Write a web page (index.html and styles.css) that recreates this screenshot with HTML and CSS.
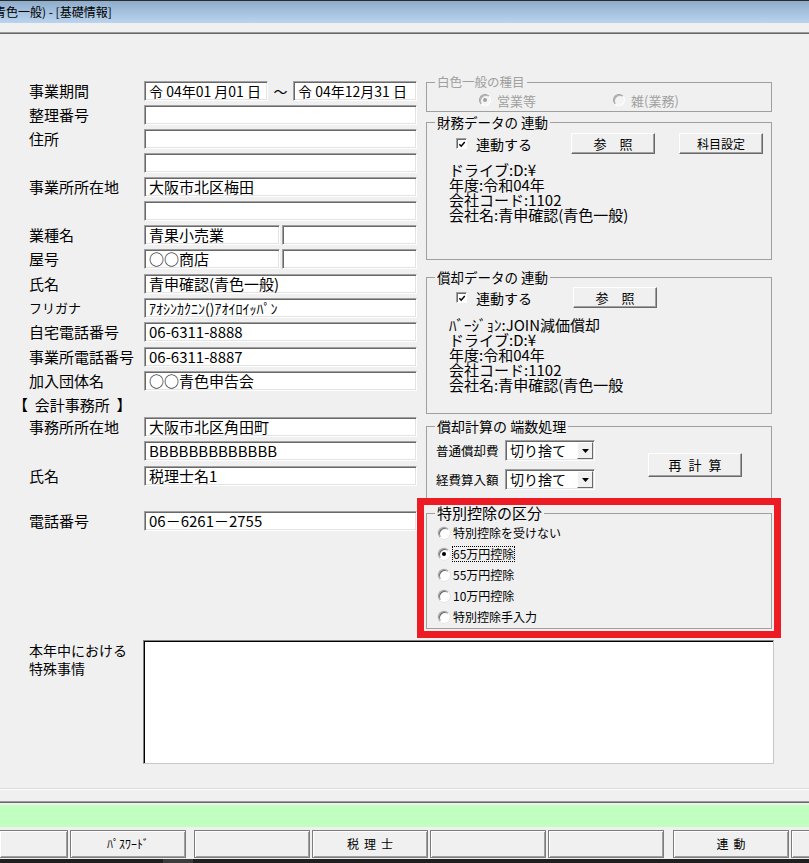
FILE: index.html
```html
<!DOCTYPE html>
<html lang="ja">
<head>
  <meta charset="UTF-8">
  <title>基礎情報</title>
  <link rel="stylesheet" href="styles.css">
</head>
<body>
  <div class="titlebar"><span class="title">青色一般) - [基礎情報]</span></div>
  <div class="menustrip"></div>
  <div class="rule"></div>

  <div class="main">
    <div class="upper">
      <div class="form">
        <div class="row"><div class="label">事業期間</div><div class="field date">令 04年01 月01 日</div><div class="tilde">～</div><div class="field date">令 04年12月31 日</div></div>
        <div class="row"><div class="label">整理番号</div><div class="field"></div></div>
        <div class="row"><div class="label">住所</div><div class="field"></div></div>
        <div class="row"><div class="label"></div><div class="field"></div></div>
        <div class="row"><div class="label">事業所所在地</div><div class="field">大阪市北区梅田</div></div>
        <div class="row"><div class="label"></div><div class="field"></div></div>
        <div class="row"><div class="label">業種名</div><div class="field half">青果小売業</div><div class="field half second"></div></div>
        <div class="row wide"><div class="label">屋号</div><div class="field half">○○商店</div><div class="field half second"></div></div>
        <div class="row"><div class="label">氏名</div><div class="field">青申確認(青色一般)</div></div>
        <div class="row"><div class="label kana">フリガナ</div><div class="field small">ｱｵｼﾝｶｸﾆﾝ()ｱｵｲﾛｲｯﾊﾟﾝ</div></div>
        <div class="row wide"><div class="label">自宅電話番号</div><div class="field">06-6311-8888</div></div>
        <div class="row"><div class="label">事業所電話番号</div><div class="field">06-6311-8887</div></div>
        <div class="row"><div class="label">加入団体名</div><div class="field">○○青色申告会</div></div>

        <div class="section">【&nbsp; 会計事務所 &nbsp;】</div>

        <div class="row"><div class="label">事務所所在地</div><div class="field">大阪市北区角田町</div></div>
        <div class="row wide"><div class="label"></div><div class="field">BBBBBBBBBBBBB</div></div>
        <div class="row"><div class="label">氏名</div><div class="field">税理士名1</div></div>
        <div class="row tel"><div class="label">電話番号</div><div class="field">06－6261－2755</div></div>
      </div>

      <div class="side">
        <fieldset class="grp g-kind">
          <legend>白色一般の種目</legend>
          <div class="kind-row">
            <span class="opt first"><span class="radio on off"></span>営業等</span>
            <span class="opt"><span class="radio off"></span>雑(業務)</span>
          </div>
        </fieldset>

        <fieldset class="grp g-fin">
          <legend>財務データの 連動</legend>
          <div class="link-row">
            <span class="check-label"><span class="check"><svg width="9" height="9" viewBox="0 0 9 9"><path d="M1.5 4.2 L3.6 6.4 L7.6 1.8" fill="none" stroke="#000" stroke-width="1.7"/></svg></span>連動する</span>
            <span class="btn ref">参　照</span>
            <span class="btn subj">科目設定</span>
          </div>
          <div class="info">
            ドライブ:D:¥<br>
            年度:令和04年<br>
            会社コード:1102<br>
            会社名:青申確認(青色一般)
          </div>
        </fieldset>

        <fieldset class="grp g-dep">
          <legend>償却データの 連動</legend>
          <div class="link-row">
            <span class="check-label"><span class="check"><svg width="9" height="9" viewBox="0 0 9 9"><path d="M1.5 4.2 L3.6 6.4 L7.6 1.8" fill="none" stroke="#000" stroke-width="1.7"/></svg></span>連動する</span>
            <span class="btn ref ref2">参　照</span>
          </div>
          <div class="info">
            ﾊﾞｰｼﾞｮﾝ:JOIN減価償却<br>
            ドライブ:D:¥<br>
            年度:令和04年<br>
            会社コード:1102<br>
            会社名:青申確認(青色一般
          </div>
        </fieldset>

        <fieldset class="grp g-round">
          <legend>償却計算の 端数処理</legend>
          <div class="round-body">
            <div class="round-rows">
              <div class="round-row"><span class="round-label">普通償却費</span><span class="select"><span class="select-text">切り捨て</span><span class="select-arrow"><svg width="7" height="4" viewBox="0 0 7 4"><path d="M0 0 H7 L3.5 4 Z" fill="#000"/></svg></span></span></div>
              <div class="round-row"><span class="round-label">経費算入額</span><span class="select"><span class="select-text">切り捨て</span><span class="select-arrow"><svg width="7" height="4" viewBox="0 0 7 4"><path d="M0 0 H7 L3.5 4 Z" fill="#000"/></svg></span></span></div>
            </div>
            <span class="btn recalc">再計算</span>
          </div>
        </fieldset>

        <div class="highlight">
          <fieldset class="grp g-deduct">
            <legend>特別控除の区分</legend>
            <div class="choice"><span class="radio"></span>特別控除を受けない</div>
            <div class="choice"><span class="radio on"></span><span class="focus">65万円控除</span></div>
            <div class="choice"><span class="radio"></span>55万円控除</div>
            <div class="choice"><span class="radio"></span>10万円控除</div>
            <div class="choice"><span class="radio"></span>特別控除手入力</div>
          </fieldset>
        </div>
      </div>
    </div>

    <div class="memo-row">
      <div class="memo-label">本年中における<br>特殊事情</div>
      <div class="memo"></div>
    </div>
  </div>

  <div class="sep"></div>
  <div class="rule"></div>
  <div class="statusbar"></div>

  <div class="fkeys">
    <span class="fkey first"></span>
    <span class="fkey small">ﾊﾟｽﾜｰﾄﾞ</span>
    <span class="fkey group"></span>
    <span class="fkey spaced">税理士</span>
    <span class="fkey"></span>
    <span class="fkey"></span>
    <span class="fkey group spaced wide">連動</span>
    <span class="fkey"></span>
  </div>
  <div class="taskbar"><span class="task"></span></div>
</body>
</html>
```

FILE: styles.css
```css
body {
  margin: 0;
  width: 809px;
  height: 863px;
  overflow: hidden;
  background: #f0f0f0;
  font-family: "Noto Sans CJK JP", sans-serif;
  color: #000;
}

.titlebar {
  height: 22px;
  border-top: 1px solid #2b2b2b;
  background: linear-gradient(#8eadcb, #bad4ef);
  font-size: 12px;
  line-height: 22px;
  white-space: nowrap;
  overflow: hidden;
}

.title {
  display: inline-block;
  margin-left: -6px;
}

.menustrip {
  height: 9px;
}

.rule {
  border-top: 1px solid #9a9a9a;
  border-bottom: 1px solid #696969;
}

.main {
  height: 754px;
}

.upper {
  display: flex;
}

/* left form */
.form {
  width: 417px;
  padding-top: 47px;
}

.row {
  display: flex;
  align-items: center;
  height: 20px;
  margin-bottom: 4px;
}

.row.wide { margin-bottom: 5px; }
.row.tel { margin-top: 25px; }

.label {
  width: 144px;
  flex: none;
  padding-left: 29px;
  box-sizing: border-box;
  font-size: 15px;
  line-height: 20px;
  white-space: nowrap;
}

.label.kana { font-size: 13px; }

.field {
  width: 273px;
  height: 20px;
  flex: none;
  box-sizing: border-box;
  padding-left: 4px;
  background: #fff;
  border: 1px solid;
  border-color: #a0a0a0 #fff #fff #a0a0a0;
  box-shadow: inset 1px 1px #696969, inset -1px -1px #e3e3e3;
  font-size: 15px;
  line-height: 18px;
  white-space: nowrap;
  overflow: hidden;
}

.field.date {
  width: 124px;
  font-size: 14px;
}

.field.half { width: 136px; }
.field.half.second { width: 135px; margin-left: 2px; }
.field.small { font-size: 14px; }

.tilde {
  width: 25px;
  text-align: center;
  font-size: 14px;
}

.section {
  height: 20px;
  line-height: 20px;
  margin: 2px 0;
  padding-left: 13px;
  font-size: 15px;
}

/* right column */
.side {
  width: 346px;
  margin-left: 9px;
  padding-top: 41px;
}

.grp {
  margin: 0;
  padding: 0;
  min-width: 0;
  border: 1px solid #a0a0a0;
  box-sizing: border-box;
}

.grp legend {
  margin-left: 8px;
  padding: 0 2px;
  font-size: 14px;
  line-height: 16px;
}

.g-kind { height: 37px; }
.g-kind legend { font-size: 12.5px; line-height: 14px; color: #a0a0a0; }

.kind-row {
  display: flex;
  margin: 4px 0 0 52px;
  height: 14px;
  font-size: 13px;
  color: #a0a0a0;
}

.opt {
  display: flex;
  align-items: center;
  gap: 6px;
}

.opt.first { width: 134px; }

.g-fin { height: 146px; margin-top: 2px; }
.g-fin legend, .g-dep legend { font-size: 13.5px; }
.g-dep { height: 145px; margin-top: 9px; }

.link-row {
  display: flex;
  align-items: center;
  height: 21px;
  margin-top: 3px;
}

.g-dep .link-row { margin-top: 2px; }

.check-label {
  display: flex;
  align-items: center;
  gap: 9px;
  width: 115px;
  margin-left: 29px;
  font-size: 14px;
}

.check {
  width: 11px;
  height: 11px;
  box-sizing: border-box;
  background: #fff;
  border: 1px solid;
  border-color: #a0a0a0 #fff #fff #a0a0a0;
  box-shadow: inset 1px 1px #696969;
  display: flex;
  align-items: center;
  justify-content: center;
}

.check svg { margin: 1px 0 0 1px; }

.btn {
  display: block;
  height: 21px;
  box-sizing: border-box;
  background: #f0f0f0;
  border: 1px solid;
  border-color: #fff #696969 #696969 #fff;
  box-shadow: inset -1px -1px #a0a0a0;
  font-size: 13px;
  line-height: 19px;
  text-align: center;
  white-space: nowrap;
}

.btn.ref { width: 84px; }
.btn.ref2 { margin-left: 2px; }
.btn.subj { width: 84px; margin-left: 24px; font-size: 12px; }

.info {
  margin: 8px 0 0 22px;
  font-size: 15px;
  line-height: 15px;
  white-space: nowrap;
}

.g-dep .info { margin-top: 9px; }

.g-round { height: 84px; margin-top: 4px; }

.round-body {
  display: flex;
  align-items: center;
  margin: 6px 0 0 9px;
}

.round-rows {
  display: flex;
  flex-direction: column;
  gap: 8px;
}

.round-row {
  display: flex;
  align-items: center;
}

.round-label {
  width: 69px;
  font-size: 12.5px;
}

.select {
  width: 90px;
  height: 21px;
  box-sizing: border-box;
  display: flex;
  background: #fff;
  border: 1px solid;
  border-color: #a0a0a0 #fff #fff #a0a0a0;
  box-shadow: inset 1px 1px #696969, inset -1px -1px #e3e3e3;
  padding: 1px 1px 1px 2px;
}

.select-text {
  flex: 1;
  font-size: 14px;
  line-height: 17px;
  padding-left: 2px;
}

.select-arrow {
  width: 16px;
  box-sizing: border-box;
  background: #f0f0f0;
  border: 1px solid;
  border-color: #fff #696969 #696969 #fff;
  display: flex;
  align-items: center;
  justify-content: center;
}

.btn.recalc {
  width: 94px;
  height: 24px;
  line-height: 22px;
  margin-left: 53px;
  letter-spacing: 7px;
  text-indent: 7px;
}

.highlight {
  width: 364px;
  margin: -4px 0 0 -9px;
  box-sizing: border-box;
  border: 7px solid #ed1c24;
  padding: 0 2px 2px;
}

.g-deduct { height: 124px; }
.g-deduct legend { font-size: 15px; }

.choice {
  display: flex;
  align-items: center;
  height: 21px;
  margin-left: 11px;
  font-size: 12px;
}

.choice:first-of-type { margin-top: 1px; }

.radio {
  position: relative;
  width: 12px;
  height: 12px;
  flex: none;
  box-sizing: border-box;
  margin-right: 3px;
  border-radius: 50%;
  background: #fff;
  border: 1px solid;
  border-color: #a0a0a0 #fff #fff #a0a0a0;
  box-shadow: inset 1px 1px #696969, 0 0 0 0.5px #d8d8d8;
}

.opt .radio { margin-right: 0; }

.radio.on::after {
  content: "";
  position: absolute;
  left: 3px;
  top: 3px;
  width: 4px;
  height: 4px;
  border-radius: 50%;
  background: #000;
}

.radio.off { box-shadow: inset 1px 1px #b0b0b0; background: #f4f4f4; }
.radio.off.on::after { background: #a0a0a0; }

.focus {
  outline: 1px dotted #000;
  line-height: 14px;
}

/* memo */
.memo-row {
  display: flex;
  margin-top: 2px;
}

.memo-label {
  width: 143px;
  box-sizing: border-box;
  padding: 1px 0 0 29px;
  font-size: 14px;
  line-height: 18px;
}

.memo {
  width: 631px;
  height: 124px;
  box-sizing: border-box;
  background: #fff;
  border: 1px solid;
  border-color: #808080 #c8c8c8 #c8c8c8 #808080;
  box-shadow: inset 1px 1px #000;
}

/* bottom */
.sep {
  border-top: 1px solid #dadada;
  border-bottom: 1px solid #fff;
  margin-bottom: 11px;
}

.statusbar {
  height: 22px;
  margin-top: 2px;
  background: #c0ffc0;
}

.fkeys {
  display: flex;
  gap: 2px;
  height: 28px;
  margin-top: 3px;
  overflow: hidden;
  white-space: nowrap;
}

.fkey {
  width: 116px;
  flex: none;
  box-sizing: border-box;
  background: #f0f0f0;
  border: 1px solid #7c7c7c;
  box-shadow: inset 1px 1px #fff, inset -1px -1px #a0a0a0;
  font-size: 12px;
  line-height: 26px;
  text-align: center;
}

.fkey.first { width: 68px; border-left: none; }
.fkey.group { margin-left: 6px; }
.fkey.wide { margin-left: 7px; }
.fkey.spaced { letter-spacing: 5px; text-indent: 5px; }

.taskbar {
  height: 4px;
  margin-top: 1px;
  background: #1f1f1f;
}

.task {
  display: block;
  width: 30px;
  height: 4px;
  margin-left: 163px;
  background: #3c3c3c;
}
```
